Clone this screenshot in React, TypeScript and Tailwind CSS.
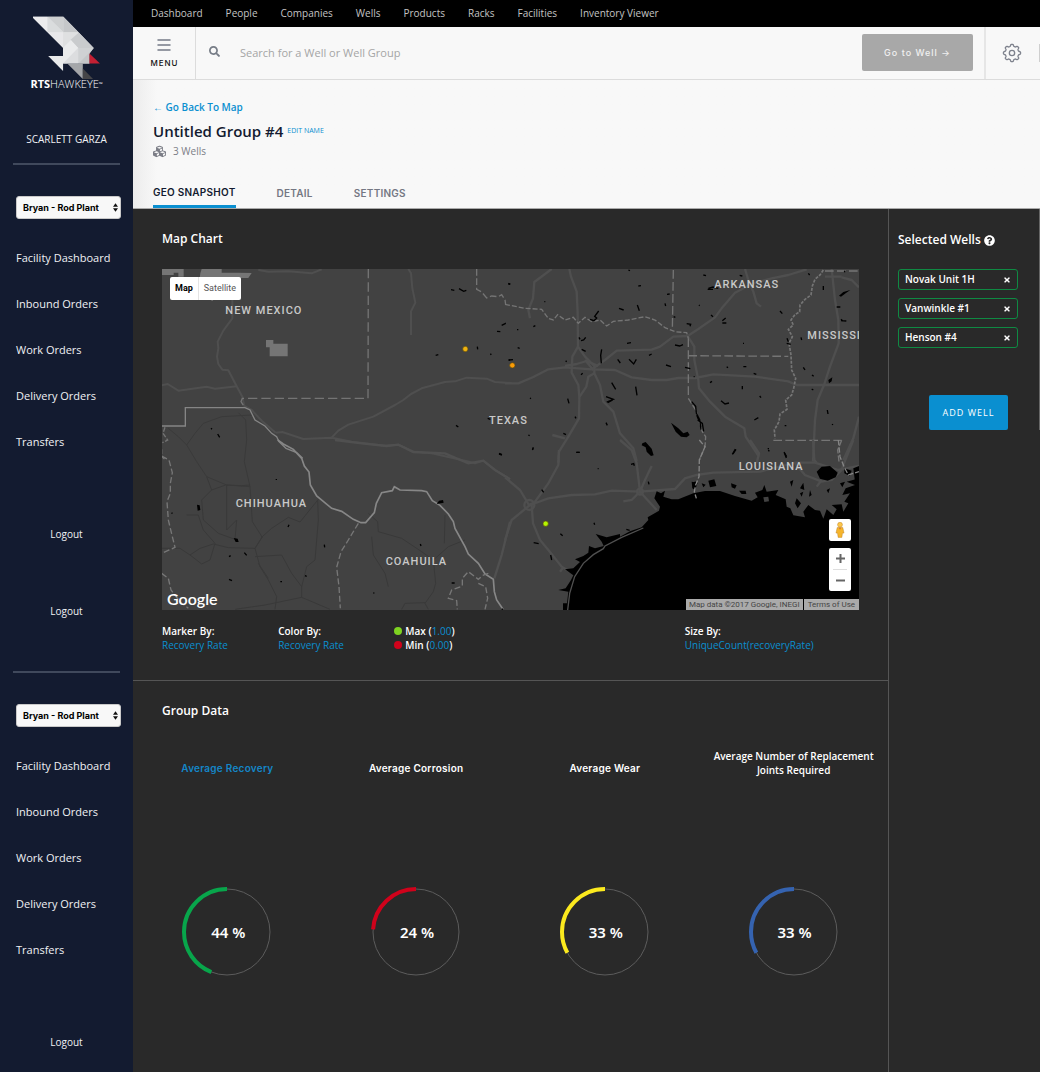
import React from 'react';
import { FaCubes, FaQuestionCircle, FaSearch, FaTimes } from 'react-icons/fa';

const topLinks = ['Dashboard', 'People', 'Companies', 'Wells', 'Products', 'Racks', 'Facilities', 'Inventory Viewer'];
const sideLinks = ['Facility Dashboard', 'Inbound Orders', 'Work Orders', 'Delivery Orders', 'Transfers'];
const wells = ['Novak Unit 1H', 'Vanwinkle #1', 'Henson #4'];

function Logo() {
  return (
    <a href="#home" className="flex flex-col items-center text-white" aria-label="RTS Hawkeye">
      <svg viewBox="37 17 206 194" className="h-[64px] w-[68px]" aria-hidden="true">
        <path d="M34 19H129L221 114L208 131V161H128V113Z" fill="#e0e1e3" />
        <path d="M34 19H81V66Z" fill="#ececed" />
        <path d="M81 19H129V66L81 19Z" fill="#cdcfd0" />
        <path d="M81 19L129 66H81Z" fill="#dadcdd" />
        <path d="M81 66H129L128 113Z" fill="#e8e8ea" />
        <path d="M129 19L176 67L129 66Z" fill="#c5c7c9" />
        <path d="M129 66H176L128 113Z" fill="#dfe0e1" />
        <path d="M176 67L221 114H174L150 90Z" fill="#c9cbcd" />
        <path d="M128 113L152 90L174 114L128 161Z" fill="#eaebec" />
        <path d="M174 114L128 161H174Z" fill="#dcdddf" />
        <path d="M174 114H221L174 161Z" fill="#cfd1d3" />
        <path d="M221 114L208 131V161H174Z" fill="#c4c6c8" />
        <path d="M83 138H128V184Z" fill="#e9eaeb" />
        <path d="M208 131L240 161H208Z" fill="#c32033" />
        <path d="M141 161H188V208Z" fill="#a4a6a9" />
        <path d="M188 176L219 208H188Z" fill="#454548" />
      </svg>
      <span className="font-['Open_Sans'] text-[11px] leading-[8px] whitespace-nowrap">
        <b>RTS</b>
        <span className="font-light">HAWKEYE</span>
        <sup className="text-[5px]">™</sup>
      </span>
    </a>
  );
}

function FacilityMenu({ id }: { id: string }) {
  return (
    <>
      <hr className="mx-[13px] border-t-2 border-[#40495c]" />
      <div className="relative mt-[31px] mr-3 ml-4">
        <select
          aria-label="Facility"
          id={id}
          className="block h-[23px] w-full appearance-none rounded-[3px] border border-[#c9c9c9] bg-[#f8f8f8] pl-[6px] font-[Inter] text-[9px] font-bold text-black"
        >
          <option>Bryan - Rod Plant</option>
        </select>
        <svg viewBox="0 0 6 10" className="pointer-events-none absolute top-[7px] right-[3px] h-[9px] w-[5px]" aria-hidden="true">
          <path d="M3 0L6 4H0ZM0 6H6L3 10Z" fill="#111" />
        </svg>
      </div>
      <ul className="mt-4">
        {sideLinks.map((l) => (
          <li key={l}>
            <a href="#nav" className="block pl-4 text-[11px] leading-[46px] whitespace-nowrap">{l}</a>
          </li>
        ))}
      </ul>
    </>
  );
}

function Gear() {
  const pts: string[] = [];
  for (let i = 0; i < 160; i++) {
    const t = (i / 160) * Math.PI * 2;
    const r = 9.2 + 1.1 * Math.tanh(2.2 * Math.cos(8 * t));
    pts.push(`${(12 + r * Math.sin(t)).toFixed(2)} ${(12 - r * Math.cos(t)).toFixed(2)}`);
  }
  return (
    <svg viewBox="0 0 24 24" className="size-5 shrink-0" fill="none" stroke="#7d818c" strokeWidth="1.6" aria-hidden="true">
      <path d={`M${pts.join('L')}Z`} />
      <circle cx="12" cy="12" r="3.2" />
    </svg>
  );
}

function Terrain() {
  return (
    <svg viewBox="0 0 2091 1023" preserveAspectRatio="xMidYMid slice" className="absolute inset-0 size-full" aria-label="Map of Texas and the Gulf coast" role="img">
      <rect width="2091" height="1023" fill="#424242" />
      {/* west Texas and New Mexico */}
      <g transform="translate(-21 -27)">
        <g fill="#757575">
          <path d="M20 27H86V50H70V38H56V45H20Z" />
          <path d="M140 27H200V38H248L290 39L280 54H258V70H132L136 40Z" />
          <path d="M333 240H355V251H398V289H344V262H333Z" />
          <path d="M162 117H178L172 123Z" />
        </g>
        <g fill="none" stroke="#4f4f4f" strokeWidth="6" strokeLinejoin="round">
          <path d="M232 110L232 175L205 212L188 245L190 265L186 290L190 312L202 329L220 331L243 375L262 410L268 438L290 450L320 482L362 518" />
          <path d="M20 376L38 372L70 392L155 380L180 386L246 379" />
          <path d="M310 30L340 35L400 34L470 40L500 28" />
          <path d="M760 27L768 40L772 85L781 128L768 154V225" />
          <path d="M362 518L382 516L445 537L530 533L590 545L690 557L730 554L775 575L830 580L920 600L960 610L985 602L1020 630L1065 657" />
          <path d="M530 533L550 512L580 494L655 470L720 435L745 420L768 402L800 385L870 366L900 364L935 353L995 356L1020 366L1070 369" />
        </g>
        <g fill="none" stroke="#3a3a3a" strokeWidth="3">
          <path d="M40 505L70 530L95 555L125 605L155 650L215 675L285 680M95 555L120 520L145 490L200 470L290 465M250 458L272 480L275 540L268 605L285 680L292 785L322 832" />
        </g>
        <g fill="none" stroke="#858585" strokeWidth="4">
          <path d="M20 498H91V443H270L285 450L300 480L330 498L350 520L365 530L372 545L393 565L425 578L443 595" />
        </g>
        <g fill="none" stroke="#747474" strokeWidth="4">
          <path d="M640 27L639 415H262L258 425L268 440" strokeDasharray="28 12" />
          <path d="M965 27V88L980 96L995 114L1010 108L1030 110L1040 104L1050 120L1052 134" strokeDasharray="20 8" />
          <path d="M30 502L24 520L38 540L22 548M20 568V590L32 600" strokeDasharray="14 5" />
        </g>
      </g>
      {/* north-east Texas, Arkansas, Mississippi */}
      <g transform="translate(1029 -27)">
        <g fill="none" stroke="#4f4f4f" strokeWidth="7" strokeLinejoin="round">
          <path d="M0 370H40L85 351L130 328L180 322L260 328L330 330L380 352L440 360H485L520 354H570L625 343L750 350L850 364L875 375H945L1062 375" />
          <path d="M140 27L88 66L84 115L70 150L75 175" />
          <path d="M193 27L198 50L215 95L218 160L219 260L202 290L200 338L220 375L223 410L222 475L190 530L162 575L160 610" />
          <path d="M260 328L300 300L335 272L440 269L465 260L505 230L548 228L580 207L630 172L650 145L690 98L740 72L800 55L850 45L905 28" />
          <path d="M720 27L730 60L745 95L755 130L768 140" />
          <path d="M219 260L240 290L268 318L268 340L250 350L244 380L224 410M268 340L285 375L295 425L325 455L345 520L385 565L395 603" />
          <path d="M548 228L568 260V300L580 360L582 385L615 425L660 470L718 505L722 530L762 590" />
          <path d="M180 318L215 312L245 303L280 318M240 300L265 330M142 525L180 535" />
          <path d="M980 27L990 120L1000 180L1001 250L975 320L957 375L938 420L930 480L924 605" />
          <path d="M1010 52L1040 60L1062 82M960 50H1010M1062 470L1045 535L1015 600" />
        </g>
        <g fill="none" stroke="#757575" strokeWidth="4">
          <path d="M505 30L502 212M550 235V415M550 287L850 289M805 541H1010M960 33H1062" strokeDasharray="26 10" />
          <path d="M0 133L60 145L110 148L130 175L145 180L158 164L180 180L205 172L220 190L240 172L260 185L285 180L305 198L325 184L370 180L420 170L450 180L480 203L510 215L545 218L550 235" strokeDasharray="15 6" />
          <path d="M955 30L945 45L930 58L922 78L918 105L900 118L885 135L884 155L870 164L858 180L865 195L850 208L862 230L852 250L858 285L860 330L872 355L866 385L860 405L842 420L846 448L825 462L822 485L808 510L810 535" strokeDasharray="9 4" strokeWidth="5" />
          <path d="M1010 541L998 570L1002 605M550 415L572 450L592 515L602 530L600 560L583 600" strokeDasharray="18 6" />
        </g>
      </g>
      {/* northern Mexico */}
      <g transform="translate(-21 513)">
        <g fill="none" stroke="#393939" strokeWidth="3">
          <path d="M20 325H75L105 345L135 325L175 312L220 323L300 325L322 290L350 265L400 232L435 246L490 178M322 290L300 325L315 380L340 420L365 470L360 508M300 350L380 345L410 400L440 440V472L525 508M440 440L455 380L480 360L490 240L488 180M340 415L310 370M240 508L330 495L440 472M155 110L170 150L212 135L260 137L285 135M170 150L140 180L145 240L190 280L240 298L245 240L215 270V135M95 225H130L145 270L180 310L165 360L140 372L105 345" />
          <path d="M640 220L668 245L670 275L740 295L800 335L835 360L842 430L835 455L810 490L820 508M835 360L880 320L930 300M870 225L868 310M650 290L655 345L690 400L700 440M740 508L750 490L810 488" />
        </g>
        <path d="M540 0L620 10L695 18L730 14L775 36L870 40L940 70L985 62L1020 90L1065 118M1065 245L1040 345L1018 415" fill="none" stroke="#505050" strokeWidth="7" />
        <path d="M368 0L385 12L415 28L440 55L448 78L462 96L466 135L485 168L530 205L560 214L595 238L618 248L632 248L658 218L664 190L680 158L712 152L718 140L735 150L800 152L815 155L832 182L855 196L880 222L895 245L900 265L930 320L940 342L970 370L990 402L1015 418L1018 455L1025 480L1044 508" fill="none" stroke="#878787" strokeWidth="5" />
        <g fill="none" stroke="#777" strokeWidth="4" strokeDasharray="18 8">
          <path d="M20 48L42 60L52 98L46 130V160L36 185L40 240L52 290L60 322L20 340M20 400L40 415L48 450L75 485L100 505" />
          <path d="M610 250L580 300L558 335L545 382L552 440L556 505M1000 400L985 405L970 418L940 395L922 415V438L890 450L880 475L905 482L907 508M970 430L992 440L998 475L990 508" />
        </g>
      </g>
      {/* Gulf coast */}
      <g transform="translate(1029 513)">
        <g fill="none" stroke="#4f4f4f" strokeWidth="7">
          <path d="M162 30L160 75L130 130L90 185L72 195L45 150L0 112M75 195L20 240L0 300M80 195L84 250L105 300L130 330L170 380L195 395M165 395L175 382M75 195L130 175L200 165L270 163L320 152L405 155L510 147L540 115L575 105L625 98L765 95L870 68L930 68L1000 90L1062 78" />
          <path d="M345 0L380 30L395 70L405 155L455 210M440 78L420 120L405 155L380 180L355 184M735 0L762 40L755 70M924 0L928 60L935 68M1045 0L1015 75L1010 90M870 70L900 105L950 125L980 120L1010 90M950 120L935 140" />
          <circle cx="73" cy="195" r="15" /><circle cx="405" cy="155" r="9" />
        </g>
        <path d="M174 510V490H186L190 455L160 450L182 445L198 420L205 406L180 388L205 385L225 366L210 358L235 348L250 338L252 318L270 325L296 318L290 305L272 282L305 292L345 282V290L375 274L410 262L430 240L428 232L462 212L465 200L448 175L455 154L468 160L480 152L475 170L500 178L520 178L565 160L600 153L645 153L690 168L740 182L758 172L750 158L772 150L778 135L785 155L820 150L812 165L842 178L845 200L856 205L865 226L900 232L895 215L910 195L930 210L945 212L955 236L965 208L985 225L995 208L980 195L1010 193L1015 215L1030 190L1018 185L1035 160L1012 165L1022 145L1050 135L1025 125L1062 115V510Z" fill="#000" />
        <path d="M188 510L194 460L209 410L235 370L265 344L295 326L300 318L350 292L415 264" fill="none" stroke="#505050" strokeWidth="4" />
        <path d="M775 172L790 170L792 184L778 186Z" fill="#424242" />
        <g fill="#000">
          <path d="M935 95L950 80L975 78L998 98L992 112L968 122L945 116Z" />
          <path d="M610 122L628 118L634 138L615 142ZM678 130L695 136L690 146L680 142ZM702 152L722 152L724 162L710 162ZM590 130L602 134L595 142ZM560 125L578 128L570 150L562 145Z" />
          <path d="M855 125L865 120L860 140ZM1018 85L1040 92L1034 108L1018 100ZM1045 85L1062 78V130L1050 125ZM895 128L885 145L898 150ZM885 160L895 155L890 170ZM875 175L888 190L878 205L870 190ZM915 150L920 165L912 170ZM840 205L855 205L855 218ZM1005 130L1020 125L1012 142ZM965 150L975 145L970 160Z" />
        </g>
        <path d="M583 0L600 20L583 60L582 110L572 135L568 155L574 175" fill="none" stroke="#858585" strokeWidth="4" strokeDasharray="16 6" />
        <path d="M1000 0L1005 50L1018 82L1030 105L1062 95" fill="none" stroke="#858585" strokeWidth="4" strokeDasharray="16 6" />
      </g>
      {/* lakes */}
      <g fill="none" stroke="#000" strokeWidth="4">
        <path transform="translate(-21 -27)" d="M888 89l10 2M912 86l14 8l8 -3M1060 70l5 3M1040 196l12 -6M1026 214l10 1M967 260l1 8M1006 281l3 3M842 286l8 -2M1060 300h5M903 496l7 5M998 475l8 3M1032 582l9 3M168 505l3 3M188 522l6 10" />
        <path transform="translate(1029 -27)" d="M10 72h6M118 125h3M36 209h4M0 190h2M85 200l6 -3M38 263l6 2M12 300l12 -1M85 565l-3 5M70 525l4 2M75 414l3 2M342 145l14 5M370 30l5 2M400 78l8 -1M397 135l6 17M480 130l2 8M486 103l8 -1M506 170l5 2M545 191l12 2l-2 6M510 255l14 3l10 -4M483 315l15 5M540 322l16 4M432 286l8 -4M366 250l12 -2M228 242l8 -2l6 -8M222 232l3 6M255 178l12 4l8 -8l-6 -5l12 -16M230 268l12 6M290 268l-3 18l2 24M338 298l8 11M372 298l14 14l8 -14M228 344l5 -4M182 302l3 3M188 416l4 14M210 470l3 5M303 488l4 8M320 368l12 20M392 380l4 26M303 410l22 8l-20 8M308 428l15 -8M175 520l8 4M610 85l14 -4l16 4M608 88h16M582 135l2 2M595 45l8 2M618 165l6 5M652 182l10 -8M652 189h12M704 46l8 2M825 153l7 8M714 250h3M665 320l4 3M715 320h9M746 340l8 3M615 368l6 -4M648 422l12 10l12 -3M712 378v10M764 408l4 5M748 480l12 -7M684 582l9 -14M790 570l3 4M838 578l6 16M839 497h5M888 232l2 8M845 250l12 3M846 235l4 10M895 322l5 8M921 345l5 4M920 387l5 3M910 40l4 5M955 78v12M995 141h11M1008 182l16 1M1008 178l6 6M967 450l2 12M982 492l1 3M1018 32l2 5M566 350h3M214 577h10M560 425l12 14l2 20l10 20l4 30M578 480l14 10l4 24M575 465l8 20" />
        <path transform="translate(-21 513)" d="M364 117v3M402 254l-3 7M508 314l1 8M376 425h5M450 407l5 2M222 350l5 -3M222 418l9 4M268 338l7 8M50 218l2 3M655 459h3M796 312l2 6M890 429h9M1032 40l8 3M1040 507l4 1" />
        <path transform="translate(1029 513)" d="M83 28l2 -6M110 149l6 8M86 308l15 3M137 345l3 15M166 281l7 6M267 248l2 6M278 86h3M378 73l8 -2l2 6M214 37h10M430 125l2 8M682 43l9 -16M790 24v4M837 36l8 14M364 268l10 3M564 133l8 -8" />
      </g>
      <g fill="#000">
        <path transform="translate(1029 -27)" d="M498 488L520 505L535 520L548 515L554 525L545 532L528 530L512 515ZM412 550L422 546L440 566L446 586L438 588L425 575L422 562L410 556ZM1002 107L1015 96L1036 90L1024 98L1008 110ZM970 360L982 352L980 364L972 370Z" />
        <path transform="translate(-21 513)" d="M126 194L134 196L136 210L128 212ZM236 294L248 296L251 306L242 306ZM852 182L864 180L866 188L845 192Z" />
      </g>
      <g fill="#c9c9c9" fontFamily="Roboto" fontSize="33" fontWeight="500" letterSpacing="3">
        <text x="190" y="135">NEW MEXICO</text>
        <text x="1657" y="56">ARKANSAS</text>
        <text x="1936" y="210">MISSISSIPPI</text>
        <text x="981" y="464">TEXAS</text>
        <text x="1730" y="602">LOUISIANA</text>
        <text x="221" y="714">CHIHUAHUA</text>
        <text x="671" y="888">COAHUILA</text>
      </g>
      <g strokeWidth="2" stroke="#5a4a10">
        <circle cx="910" cy="240" r="8" fill="#f0b310" />
        <circle cx="1051" cy="289" r="8" fill="#fb9c07" />
        <circle cx="1151" cy="764" r="8" fill="#b4f500" />
      </g>
    </svg>
  );
}

function WellMap() {
  return (
    <div className="relative mt-5 h-[341px] overflow-hidden font-[Roboto]">
      <Terrain />
      <div className="absolute top-2 left-2 flex h-[23px] rounded-[2px] bg-white text-[9px] text-[#565656]">
        <button type="button" className="border-r border-[#e4e4e4] px-[5px] font-bold text-black">Map</button>
        <button type="button" className="px-[5px]">Satellite</button>
      </div>
      <a href="#google" className="absolute bottom-px left-[5px] font-[Lato] text-[16px] leading-[20px] font-semibold text-white">Google</a>
      <div className="absolute right-2 bottom-[19px] flex w-[22px] flex-col gap-[7px]">
        <button type="button" aria-label="Street View" className="grid h-[22px] place-items-center rounded-[2px] bg-white">
          <svg viewBox="0 0 30 52" className="h-4 w-[10px]" stroke="#bd8124" strokeWidth="1.5" aria-hidden="true">
            <path d="M6 18H24L28 36H23L21 50H9L7 36H2Z" fill="#f6b52c" />
            <circle cx="15" cy="9" r="8" fill="#fcc64a" />
            <path d="M11 19L15 25L19 19Z" fill="#d8702b" stroke="none" />
          </svg>
        </button>
        <div className="flex h-[43px] flex-col divide-y divide-[#dedede] rounded-[2px] bg-white px-1">
          <button type="button" aria-label="Zoom in" className="grid flex-1 place-items-center">
            <svg viewBox="0 0 9 9" className="size-[9px]" stroke="#666" strokeWidth="2" aria-hidden="true"><path d="M0 4.5H9M4.5 0V9" /></svg>
          </button>
          <button type="button" aria-label="Zoom out" className="grid flex-1 place-items-center">
            <svg viewBox="0 0 9 9" className="size-[9px]" stroke="#666" strokeWidth="2" aria-hidden="true"><path d="M0 4.5H9" /></svg>
          </button>
        </div>
      </div>
      <div className="absolute right-0 bottom-0 flex h-[11px] gap-px text-[8px] leading-[11px] text-[#444]">
        <span className="bg-[#aaa] px-[3px]">Map data ©2017 Google, INEGI</span>
        <a href="#terms" className="bg-[#aaa] px-1">Terms of Use</a>
      </div>
    </div>
  );
}

function Gauge({ value, color }: { value: number; color: string }) {
  const c = 2 * Math.PI * 43;
  return (
    <div className="grid place-items-center">
      <svg viewBox="0 0 92 92" className="col-start-1 row-start-1 size-[92px]" fill="none" aria-hidden="true">
        <circle cx="46" cy="46" r="43" stroke="#5c5c5c" />
        <circle cx="46" cy="46" r="43" stroke={color} strokeWidth="4" strokeDasharray={`${(c * value) / 100} ${c}`} transform="matrix(0 -1 -1 0 92 92)" />
      </svg>
      <span className="col-start-1 row-start-1 pt-px pl-[2px] font-['Noto_Sans'] text-[15px] font-semibold">{value} %</span>
    </div>
  );
}

const gauges = [
  { label: 'Average Recovery', value: 44, color: '#08a54b', style: 'font-[Inter] text-[10px] font-semibold tracking-wide text-[#1486c8] leading-[18px]' },
  { label: 'Average Corrosion', value: 24, color: '#d0021b', style: 'font-[Inter] text-[10px] font-semibold tracking-wide leading-[18px]' },
  { label: 'Average Wear', value: 33, color: '#fbe91e', style: 'font-[Inter] text-[10px] font-semibold tracking-wide leading-[18px]' },
  { label: 'Average Number of Replacement Joints Required', value: 33, color: '#3563b0', style: 'text-[10px] font-semibold leading-[14px]' },
];

export default function App() {
  return (
    <div className="flex min-h-[1072px] bg-[#292929] font-['Open_Sans',sans-serif] text-white">
      <aside className="w-[133px] shrink-0 bg-[#131b30] text-[#f0f1f4]">
        <div className="h-[75px] pt-4"><Logo /></div>
        <p className="mt-[55px] mb-[15px] text-center text-[10px] leading-[18px]">SCARLETT GARZA</p>
        <FacilityMenu id="facility-top" />
        <a href="#logout" className="mt-[60px] block text-center text-[10px] leading-[18px]">Logout</a>
        <a href="#logout" className="mt-[59px] mb-[51px] block text-center text-[10px] leading-[18px]">Logout</a>
        <FacilityMenu id="facility-bottom" />
        <a href="#logout" className="mt-[60px] block text-center text-[10px] leading-[18px]">Logout</a>
      </aside>

      <div className="flex min-w-0 flex-1 flex-col">
        <nav className="flex h-[27px] gap-[23px] bg-black pl-[18px] text-[10px] leading-[27px] whitespace-nowrap text-[#c4c4c4]">
          {topLinks.map((l) => <a key={l} href="#top">{l}</a>)}
        </nav>

        <div className="flex h-[53px] border-b border-[#dcdcdc] bg-[#f8f8f8]">
          <button type="button" className="flex w-[63px] shrink-0 flex-col items-center gap-[7px] border-r border-[#dcdcdc] pt-3 font-[Inter] text-[8px] leading-[10px] font-medium tracking-[1px] text-[#111]">
            <svg viewBox="0 0 14 12" className="h-3 w-[14px]" stroke="#747a87" strokeWidth="1.5" strokeLinecap="round" aria-hidden="true"><path d="M1 1H13M1 6H13M1 11H13" /></svg>
            <span className="pl-px">MENU</span>
          </button>
          <label className="flex min-w-0 flex-1 items-center pl-[13px]">
            <FaSearch className="mb-1 size-[11px] text-[#777d87]" />
            <input type="search" aria-label="Search for a Well or Well Group" placeholder="Search for a Well or Well Group" className="ml-5 min-w-0 flex-1 text-[11px] text-black outline-none placeholder:text-[#a5a5a5]" />
          </label>
          <button type="button" className="mt-[7px] h-[37px] w-[111px] shrink-0 rounded-[2px] bg-[#a8a8a8] font-[Inter] text-[9px] font-medium tracking-[1px] text-[#f0f0f0]">Go to Well →</button>
          <div className="ml-[11px] flex w-14 shrink-0 items-center justify-between border-l-2 border-[#e6e6e6] pl-4">
            <button type="button" aria-label="Settings"><Gear /></button>
            <span className="h-[18px] w-px bg-[#cfcfcf]" />
          </div>
        </div>

        <header className="flex h-[129px] flex-col border-b border-[#aaa] bg-[#f8f8f8] bg-linear-to-r from-[#ececec] to-[#f8f8f8] to-[24px] pl-5 text-[#131b30]">
          <a href="#map" className="mt-[18px] self-start text-[10px] leading-[18px] font-semibold text-[#0a8fd0]">← Go Back To Map</a>
          <div className="mt-[2px] flex items-center gap-1">
            <h1 className="text-[15px] leading-[26px] font-semibold">Untitled Group #4</h1>
            <button type="button" className="text-[7px] text-[#0a8fd0]">EDIT NAME</button>
          </div>
          <p className="flex items-center gap-[7px] text-[10px] leading-[14px] text-[#7b7d86]"><FaCubes className="size-[13px]" />3 Wells</p>
          <div className="mt-auto flex gap-[41px] font-[Inter] text-[10px] leading-[14px] font-semibold tracking-wide text-[#747783]">
            <a href="#geo" className="border-b-[3px] border-[#0a8fd0] pb-[6px] text-[#131b30]">GEO SNAPSHOT</a>
            <a href="#detail" className="pt-px">DETAIL</a>
            <a href="#settings" className="pt-px">SETTINGS</a>
          </div>
        </header>

        <div className="flex min-h-0 flex-1">
          <main className="min-w-0 flex-1">
            <section className="border-b border-[#555] px-[29px] pt-5 pb-7">
              <h2 className="text-[12px] leading-5 font-semibold">Map Chart</h2>
              <WellMap />
              <div className="mt-[14px] grid grid-cols-12 text-[10px] leading-[14px] font-semibold">
                <p className="col-span-2">Marker By:<br /><a href="#marker" className="font-normal text-[#0a8fd0]">Recovery Rate</a></p>
                <p className="col-span-2">Color By:<br /><a href="#color" className="font-normal text-[#0a8fd0]">Recovery Rate</a></p>
                <div className="col-span-5">
                  <p className="flex items-center"><span className="mr-[3px] size-2 rounded-full bg-[#7ed321]" />Max (<span className="font-normal text-[#0a8fd0]">1.00</span>)</p>
                  <p className="flex items-center"><span className="mr-[3px] size-2 rounded-full bg-[#d0021b]" />Min (<span className="font-normal text-[#0a8fd0]">0.00</span>)</p>
                </div>
                <p className="col-span-3">Size By:<br /><a href="#size" className="font-normal text-[#0a8fd0]">UniqueCount(recoveryRate)</a></p>
              </div>
            </section>
            <section className="pt-5">
              <h2 className="px-[29px] text-[12px] leading-5 font-semibold">Group Data</h2>
              <div className="mt-7 grid grid-cols-4">
                {gauges.map((g) => (
                  <article key={g.label} className="text-center">
                    <div className="flex h-7 items-end justify-center px-3"><h3 className={g.style}>{g.label}</h3></div>
                    <div className="mt-[109px]"><Gauge value={g.value} color={g.color} /></div>
                  </article>
                ))}
              </div>
            </section>
          </main>
          <aside className="relative w-[152px] shrink-0 border-l border-[#555] pt-[21px] pr-[22px] pl-[9px]">
            <span className="absolute top-0 right-0 h-[221px] w-px bg-[#666]" />
            <h2 className="flex items-center gap-[3px] text-[12px] leading-5 font-semibold whitespace-nowrap">Selected Wells <FaQuestionCircle className="size-[11px]" /></h2>
            <ul className="mt-[19px] flex flex-col gap-2 text-[10px] font-semibold">
              {wells.map((w) => (
                <li key={w} className="flex h-[21px] items-center justify-between rounded-[3px] border border-[#0f8a43] px-[6px]">
                  {w}
                  <button type="button" aria-label={`Remove ${w}`}><FaTimes className="size-2" /></button>
                </li>
              ))}
            </ul>
            <button type="button" className="mt-[47px] ml-[31px] h-[35px] w-[79px] rounded-[2px] bg-[#0a8fd0] text-[9px] tracking-[1px]">ADD WELL</button>
          </aside>
        </div>
      </div>
    </div>
  );
}
